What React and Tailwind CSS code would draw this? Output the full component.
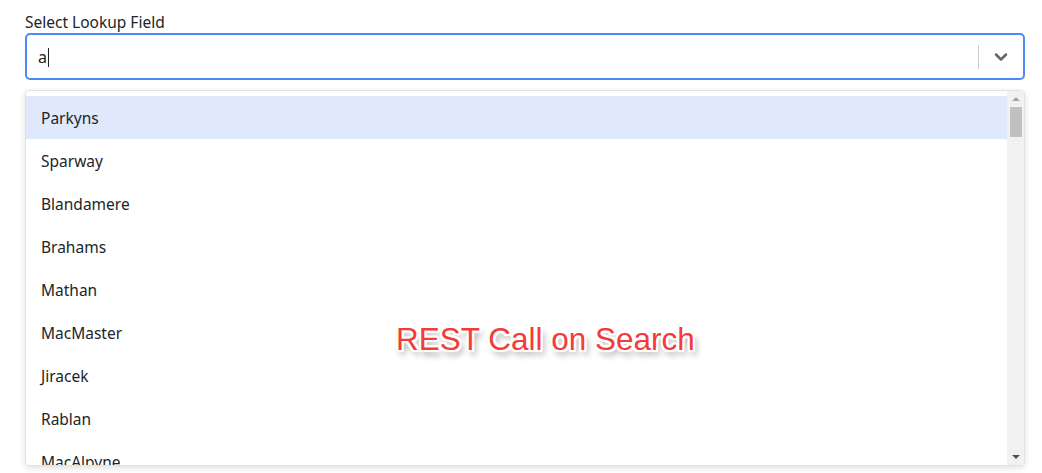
import { ChevronDown } from 'lucide-react'

const options = [
  'Parkyns',
  'Sparway',
  'Blandamere',
  'Brahams',
  'Mathan',
  'MacMaster',
  'Jiracek',
  'Rablan',
  'MacAlpyne',
]

function App() {
  return (
    <div
      className="relative w-[1042px] h-[473px] bg-white overflow-hidden pl-[25px] pr-[17px] pt-[10px] text-[#212529]"
      style={{ fontFamily: '"Noto Sans", "Open Sans", sans-serif' }}
    >
      <label className="block text-[15.5px] pt-[2px] leading-[21px]">Select Lookup Field</label>

      {/* Control */}
      <div className="flex items-center h-[47px] border-2 border-[#4c8bf5] rounded-[5px] bg-white">
        <div className="flex-1 pl-[11px] pt-px flex items-center text-[16px]">
          <span>a</span>
          <span className="inline-block w-px h-[19px] bg-[#222] ml-px"></span>
        </div>
        <div className="w-px h-[24px] bg-[#ccc]"></div>
        <div className="w-[44px] flex items-center justify-center text-[#666]">
          <ChevronDown size={20} strokeWidth={3} />
        </div>
      </div>

      {/* Menu */}
      <div className="mt-[10px] h-[376px] flex border border-[#e2e2e2] rounded-[4px] shadow-[0_2px_6px_rgba(0,0,0,0.12)] overflow-hidden">
        <div className="flex-1 pt-[5px]">
          {options.map((opt, i) => (
            <div
              key={opt}
              className={`h-[43px] flex items-center pl-[15px] pt-[3px] text-[15.5px] ${i === 0 ? 'bg-[#e0e8fb]' : ''}`}
            >
              {opt}
            </div>
          ))}
        </div>
        <div className="w-[17px] bg-[#f1f1f1] flex flex-col items-center">
          <div className="h-[16px] flex items-center justify-center">
            <div className="w-0 h-0 border-l-[4px] border-r-[4px] border-b-[4px] border-l-transparent border-r-transparent border-b-[#a3a3a3]"></div>
          </div>
          <div className="w-[12px] h-[30px] bg-[#c1c1c1]"></div>
          <div className="flex-1"></div>
          <div className="h-[16px] flex items-center justify-center">
            <div className="w-0 h-0 border-l-[4px] border-r-[4px] border-t-[4px] border-l-transparent border-r-transparent border-t-[#505050]"></div>
          </div>
        </div>
      </div>

      {/* Annotation */}
      <div
        className="absolute left-[396px] top-[320px] text-[31.5px] leading-[38px] text-[#f53a3a]"
        style={{
          fontFamily: '"Liberation Sans", Arial, sans-serif',
          textShadow:
            '-2px -2px 0 #fff, 2px -2px 0 #fff, -2px 2px 0 #fff, 2px 2px 0 #fff, 0 -2px 0 #fff, 0 2px 0 #fff, -2px 0 0 #fff, 2px 0 0 #fff, 3px 5px 6px rgba(0,0,0,0.45)',
        }}
      >
        REST Call on Search
      </div>
    </div>
  )
}

export default App
